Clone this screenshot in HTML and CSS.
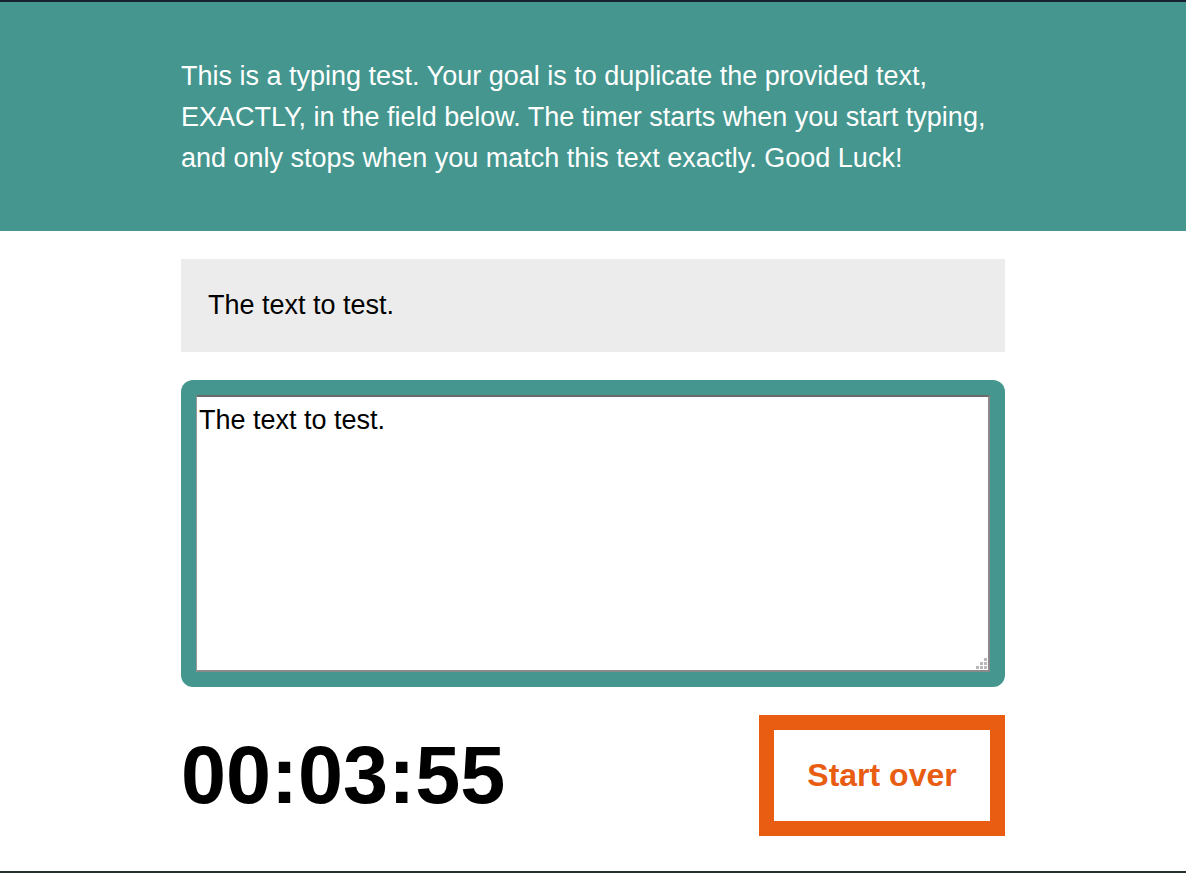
FILE: index.html
```html
<!DOCTYPE html>
<html lang="en">
<head>
<meta charset="utf-8">
<title>Typing Test</title>
<link rel="stylesheet" href="styles.css">
</head>
<body>
<div class="page">
  <header class="intro">
    <p class="intro-text">This is a typing test. Your goal is to duplicate the provided text, EXACTLY, in the field below. The timer starts when you start typing, and only stops when you match this text exactly. Good Luck!</p>
  </header>
  <main class="container">
    <div class="sample"><p class="sample-text">The text to test.</p></div>
    <div class="editor">
      <textarea class="entry" id="entry">The text to test.</textarea>
      <svg class="grip" width="11" height="11" viewBox="0 0 11 11" aria-hidden="true">
        <rect x="8" y="0" width="3" height="3"/>
        <rect x="4" y="4" width="3" height="3"/>
        <rect x="8" y="4" width="3" height="3"/>
        <rect x="0" y="8" width="3" height="3"/>
        <rect x="4" y="8" width="3" height="3"/>
        <rect x="8" y="8" width="3" height="3"/>
      </svg>
    </div>
    <div class="controls">
      <div class="timer">00:03:55</div>
      <button class="reset" type="button">Start over</button>
    </div>
  </main>
</div>
<script src="script.js"></script>
</body>
</html>
```
FILE: styles.css
```css
html, body {
  margin: 0;
  padding: 0;
  background: #ffffff;
}
body {
  font-family: "Liberation Sans", Arial, sans-serif;
  color: #000;
}
.page {
  min-height: 100vh;
  box-sizing: border-box;
  border-top: 2px solid #15212d;
  border-bottom: 2px solid #22332f;
  display: flex;
  flex-direction: column;
}
.intro {
  background: #44968e;
  padding: 54px 0 52px;
}
.intro-text {
  width: 824px;
  margin: 0 auto;
  color: #ffffff;
  font-size: 27px;
  line-height: 41px;
}
.container {
  width: 824px;
  margin: 0 auto;
  padding-top: 28px;
  display: flex;
  flex-direction: column;
  gap: 28px;
}
.sample {
  background: #ececec;
  height: 93px;
  box-sizing: border-box;
  padding: 0 27px;
  display: flex;
  align-items: center;
}
.sample-text {
  margin: 0;
  font-size: 27px;
  line-height: 29px;
}
.editor {
  position: relative;
  background: #44968e;
  border-radius: 12px;
  padding: 15px;
  display: flex;
}
.entry {
  flex: 1;
  height: 277px;
  box-sizing: border-box;
  margin: 0;
  padding: 2px;
  font-family: "Liberation Sans", Arial, sans-serif;
  font-size: 27px;
  line-height: 42px;
  color: #000;
  caret-color: #000;
  background: #fff;
  border-style: solid;
  border-width: 2px 2px 2px 1px;
  border-color: #6a6a6a #8a8a8a #8a8a8a #9a9a9a;
  border-radius: 0;
  outline: none;
  resize: none;
}
.grip {
  position: absolute;
  right: 18px;
  bottom: 18px;
  fill: #b8b8b8;
  pointer-events: none;
}
.controls {
  display: flex;
  justify-content: space-between;
  align-items: center;
}
.timer {
  font-size: 81px;
  font-weight: bold;
  line-height: 1;
}
.reset {
  width: 246px;
  height: 121px;
  box-sizing: border-box;
  border: 15px solid #e85d12;
  background: #ffffff;
  color: #e85d12;
  font-family: "Liberation Sans", Arial, sans-serif;
  font-size: 32px;
  font-weight: bold;
  padding: 0;
  cursor: pointer;
}
```
FILE: script.js
```js
var ta = document.getElementById('entry');
ta.focus();
var n = ta.value.length;
ta.setSelectionRange(n, n);
```
